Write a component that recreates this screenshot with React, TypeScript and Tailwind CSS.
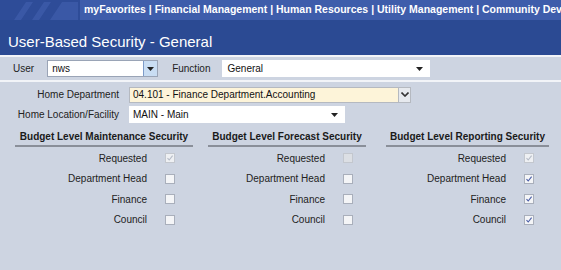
const font = { fontFamily: '"Liberation Sans", Arial, sans-serif' };

type Box = 'off' | 'on' | 'dis' | 'disOn';

function Check({ state }: { state: Box }) {
  const bg = state === 'dis' ? 'bg-[#dcdfe4]' : state === 'disOn' ? 'bg-[#eef0f3]' : 'bg-[#f4f5f7]';
  const border = state === 'dis' || state === 'disOn' ? 'border-[#c3c7ce]' : 'border-[#a9afbb]';
  return (
    <span className={`flex h-[10px] w-[10px] items-center justify-center border ${border} ${bg}`}>
      {(state === 'on' || state === 'disOn') && (
        <svg width="8" height="8" viewBox="0 0 8 8">
          <path d="M1.5 4.2 L3.2 6 L6.6 1.6" fill="none" stroke={state === 'on' ? '#4b5fa8' : '#b6bcc8'} strokeWidth="1.1" />
        </svg>
      )}
    </span>
  );
}

function Section({ title, width, labelW, rows }: { title: string; width: string; labelW: string; rows: [string, Box][] }) {
  return (
    <div className={width}>
      <div className="whitespace-nowrap border-b-2 border-[#8a8f99] pb-[1px] text-center text-[10px] font-bold text-[#1a1a1a]">{title}</div>
      <div className="mt-[1px] flex flex-col">
        {rows.map(([label, s]) => (
          <div key={label} className="flex h-[20.5px] items-center">
            <span className={`${labelW} text-right text-[10px] text-[#222]`}>{label}</span>
            <span className="ml-[18px]"><Check state={s} /></span>
          </div>
        ))}
      </div>
    </div>
  );
}

function Caret() {
  return (
    <svg width="7" height="4" viewBox="0 0 7 4"><path d="M0 0 H7 L3.5 4 Z" fill="#222" /></svg>
  );
}

export default function App() {
  return (
    <div className="h-[270px] w-[561px] overflow-hidden bg-[#cdd4e1]" style={font}>
      {/* top nav, cut off at the right edge like the original */}
      <div className="flex h-[20px] items-center overflow-hidden bg-[#3e5dab]">
        <div className="relative h-[20px] w-[80px] shrink-0 overflow-hidden bg-[#2e4c98]">
          <svg width="80" height="20" className="absolute inset-0">
            <path d="M14 20 L26 2 L33 2 L21 20 Z M32 20 L44 2 L51 2 L39 20 Z M50 20 L62 2 L78 2 L78 20 Z" fill="#3a58a6" />
          </svg>
        </div>
        <div className="ml-[4px] shrink-0 whitespace-nowrap text-[10.5px] font-bold text-white">
          myFavorites | Financial Management | Human Resources | Utility Management | Community Development
        </div>
      </div>
      {/* title */}
      <div className="flex h-[35px] items-end bg-[#2b4a93] pb-[6px] pl-[8px]">
        <span className="text-[15px] leading-none text-white">User-Based Security - General</span>
      </div>
      <div className="h-[2px] bg-[#f2f4f8]" />
      {/* user row */}
      <div className="flex h-[23px] items-center">
        <span className="ml-[13px] text-[10px] text-[#222]">User</span>
        <div className="ml-[13px] flex h-[17px] w-[111px] items-stretch border border-[#9aa4b6] bg-white">
          <span className="flex-1 pl-[4px] text-[10px] leading-[15px] text-[#111]">nws</span>
          <span className="flex w-[14px] items-center justify-center border-l border-[#7d9bc9] bg-[#c9ddf3]"><Caret /></span>
        </div>
        <span className="ml-[14px] text-[10px] text-[#222]">Function</span>
        <div className="ml-[12px] flex h-[17px] w-[208px] items-center justify-between bg-white pl-[5px] pr-[7px]">
          <span className="text-[10px] text-[#111]">General</span>
          <Caret />
        </div>
      </div>
      <div className="h-[2px] bg-[#f2f4f8]" />
      {/* home department */}
      <div className="mt-[4px] flex h-[17px] items-center">
        <span className="w-[119px] text-right text-[10px] text-[#222]">Home Department</span>
        <div className="ml-[10px] flex h-[16px] w-[282px] items-stretch border border-[#b5b9c0] bg-[#fdf4d9]">
          <span className="flex-1 pl-[3px] text-[10px] leading-[14px] text-[#111]">04.101 - Finance Department.Accounting</span>
          <span className="flex w-[12px] items-center justify-center border-l border-[#b5b9c0] bg-[#e6e9ee]">
            <svg width="8" height="5" viewBox="0 0 8 5"><path d="M0.5 0.5 L4 4 L7.5 0.5" fill="none" stroke="#333" strokeWidth="1.6" /></svg>
          </span>
        </div>
      </div>
      <div className="mt-[3px] flex h-[17px] items-center">
        <span className="w-[119px] text-right text-[10px] text-[#222]">Home Location/Facility</span>
        <div className="ml-[10px] flex h-[17px] w-[216px] items-center justify-between bg-white pl-[4px] pr-[7px]">
          <span className="text-[10px] text-[#111]">MAIN - Main</span>
          <Caret />
        </div>
      </div>
      {/* sections */}
      <div className="mt-[6px] flex">
        <div className="ml-[15px]">
          <Section
            title="Budget Level Maintenance Security"
            width="w-[178px]"
            labelW="w-[132px]"
            rows={[['Requested', 'disOn'], ['Department Head', 'off'], ['Finance', 'off'], ['Council', 'off']]}
          />
        </div>
        <div className="ml-[15px]">
          <Section
            title="Budget Level Forecast Security"
            width="w-[158px]"
            labelW="w-[117px]"
            rows={[['Requested', 'dis'], ['Department Head', 'off'], ['Finance', 'off'], ['Council', 'off']]}
          />
        </div>
        <div className="ml-[20px]">
          <Section
            title="Budget Level Reporting Security"
            width="w-[163px]"
            labelW="w-[120px]"
            rows={[['Requested', 'disOn'], ['Department Head', 'on'], ['Finance', 'on'], ['Council', 'on']]}
          />
        </div>
      </div>
    </div>
  );
}
